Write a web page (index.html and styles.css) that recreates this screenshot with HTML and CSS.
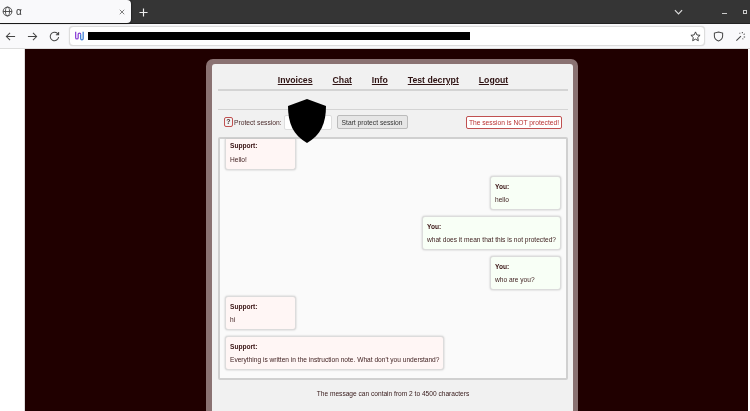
FILE: index.html
```html
<!DOCTYPE html>
<html lang="en">
<head>
<meta charset="utf-8">
<title>α</title>
<link rel="stylesheet" href="styles.css">
</head>
<body>
<div class="browser">
  <div class="tabbar">
    <div class="tab">
      <svg class="globe" viewBox="0 0 12 12" width="11" height="11"><circle cx="6" cy="6" r="4.8"/><ellipse cx="6" cy="6" rx="2.2" ry="4.8"/><path d="M1.2 6h9.6"/></svg>
      <span class="tab-title">α</span>
      <svg class="tab-close" viewBox="0 0 8 8" width="6" height="6"><path d="M1 1l6 6M7 1l-6 6"/></svg>
    </div>
    <svg class="new-tab" viewBox="0 0 10 10" width="9" height="9"><path d="M5 .5v9M.5 5h9"/></svg>
    <div class="tabbar-right">
      <svg class="chev" viewBox="0 0 10 6" width="9" height="6"><path d="M1 1l4 4 4-4"/></svg>
      <span class="min"></span>
      <span class="max"></span>
    </div>
  </div>
  <div class="toolbar">
    <svg class="tool" viewBox="0 0 12 12" width="11" height="11"><path d="M11 6H1.500M5.500 2L1.500 6l4 4"/></svg>
    <svg class="tool" viewBox="0 0 12 12" width="11" height="11"><path d="M1 6h9.500M6.500 2l4 4-4 4"/></svg>
    <svg class="tool reload" viewBox="0 0 12 12" width="11" height="11"><path d="M10.500 6.500A4.600 4.600 0 1 1 9.200 2.700L10.500 4M10.500 1v3h-3"/></svg>
    <div class="urlbar">
      <svg class="urlicon" viewBox="0 0 12 12" width="10" height="10"><path class="u1" d="M2 1v7a1.500 1.500 0 0 0 3 0V4a1.500 1.500 0 0 1 3 0"/><path class="u2" d="M8 4v5a1.500 1.500 0 0 0 3 0V1"/></svg>
      <span class="redact"></span>
      <svg class="star" viewBox="0 0 12 12" width="11" height="11"><path d="M6 1l1.500 3.300 3.500.4-2.600 2.400.7 3.500L6 8.900l-3.100 1.700.7-3.500L1 4.700l3.500-.4z"/></svg>
    </div>
    <svg class="tool shield-tool" viewBox="0 0 12 12" width="11" height="11"><path d="M6 1l4.500 1.300v3.200C10.500 8.500 8 10.300 6 11 4 10.300 1.500 8.500 1.500 5.500V2.300z"/></svg>
    <svg class="tool wand" viewBox="0 0 12 12" width="11" height="11"><path d="M1.500 10.500L6.500 5.500M8 1v1.500M10.500 3l-1 1M11 6.500H9.500M9 9l-.8-.8M5 2l.6.8"/></svg>
  </div>
</div>
<div class="viewport">
  <div class="gutter"></div>
  <main class="site">
    <div class="wrap">
      <div class="panel">
        <nav class="menu">
          <a href="#">Invoices</a>
          <a href="#">Chat</a>
          <a href="#">Info</a>
          <a href="#">Test decrypt</a>
          <a href="#">Logout</a>
        </nav>
        <div class="spacer"></div>
        <div class="protect">
          <span class="help">?</span>
          <label class="protect-label">Protect session:</label>
          <input class="pass" type="text">
          <button class="start">Start protect session</button>
          <span class="status">The session is NOT protected!</span>
        </div>
        <section class="chat">
          <div class="msg them first"><b>Support:</b><p>Hello!</p></div>
          <div class="msg me"><b>You:</b><p>hello</p></div>
          <div class="msg me"><b>You:</b><p>what does it mean that this is not protected?</p></div>
          <div class="msg me"><b>You:</b><p>who are you?</p></div>
          <div class="msg them"><b>Support:</b><p>hi</p></div>
          <div class="msg them"><b>Support:</b><p>Everything is written in the instruction note. What don't you understand?</p></div>
        </section>
        <p class="hint">The message can contain from 2 to 4500 characters</p>
      </div>
    </div>
  </main>
  <div class="edge"></div>
</div>
<svg class="blackshield" viewBox="0 0 38 44" width="38" height="44"><path d="M19 0L38 7C38 24 33 36 19 44 5 36 0 24 0 7z"/></svg>
</body>
</html>
```
FILE: styles.css
```css
* { box-sizing: border-box; }
html, body { margin: 0; height: 411px; overflow: hidden; }
body { font-family: "Liberation Sans", Arial, sans-serif; background: #fff; position: relative; filter: blur(.3px); }

.tabbar { height: 24px; background: #353535; display: flex; align-items: flex-start; border-bottom: 1px solid #222; }
.tab { width: 131px; height: 23px; background: #f9f9fb; border-radius: 0 4px 4px 0; display: flex; align-items: center; padding: 0 6px 0 2px; box-shadow: 0 0 2px #000; }
.globe { fill: none; stroke: #444; stroke-width: 1; }
.tab-title { font-size: 10px; color: #333; margin-left: 3px; flex: 1; }
.tab-close { fill: none; stroke: #555; stroke-width: 1; }
.new-tab { fill: none; stroke: #eee; stroke-width: 1.3; margin: 8px 0 0 8px; }
.tabbar-right { margin-left: auto; display: flex; align-items: center; height: 23px; padding-right: 2px; }
.chev { fill: none; stroke: #ddd; stroke-width: 1.3; }
.min { width: 5px; height: 1px; background: #ccc; margin: 3px 0 0 39px; }
.max { width: 4px; height: 4px; border: 1px solid #ccc; margin: 0 1px 0 16px; }

.toolbar { height: 25px; background: #f9f9fb; display: flex; align-items: center; padding-left: 5px; border-bottom: 1px solid #ddd; }
.tool { fill: none; stroke: #444; stroke-width: 1.1; margin-right: 11px; flex: none; }
.reload { margin-right: 9px; }
.urlbar { width: 636px; height: 20px; background: #fff; border: 1px solid #ddd; border-radius: 4px; display: flex; align-items: center; padding-left: 4px; box-shadow: 0 0 1px #ccc; flex: none; }
.urlicon { fill: none; stroke-width: 1.5; flex: none; }
.u1 { stroke: #8a3fd6; }
.u2 { stroke: #3f7fd6; }
.redact { width: 382px; height: 8px; background: #000; margin-left: 4px; }
.star { fill: none; stroke: #333; stroke-width: 1; margin-left: auto; margin-right: 3px; }
.shield-tool { margin-left: 8px; margin-right: 11px; }
.wand { margin-right: 0; }

.viewport { display: flex; height: 362px; overflow: hidden; }
.gutter { width: 25px; background: #fff; border-right: 1px solid #ddd; flex: none; }
.site { flex: 1; background: #200000; padding: 10px 0 0 181px; overflow: hidden; }
.edge { width: 2px; background: #fff; flex: none; }

.wrap { width: 372px; background: #8a7272; border-radius: 7px 7px 0 0; padding: 5px 5px 0 6px; }
.panel { background: #f1f1f1; border-radius: 3px 3px 0 0; padding: 0 5px 30px 6px; height: 400px; }

.menu { height: 27px; display: flex; justify-content: center; align-items: center; gap: 20px; border-bottom: 2px solid #d4d4d4; padding: 6px 0 0 0; }
.menu a { font-size: 8.7px; font-weight: bold; color: #2e1212; text-decoration: underline; }
.spacer { height: 19px; border-bottom: 1px solid #d4d4d4; }
.protect { height: 27px; display: flex; align-items: center; font-size: 6.7px; color: #4a2a2a; padding-bottom: 3px; }
.help { width: 9px; height: 10px; border: 1px solid #c05050; border-radius: 2px; margin-left: 6px; font-size: 7px; text-align: center; line-height: 8px; font-weight: bold; }
.protect-label { margin-left: 1px; }
.pass { width: 48px; height: 15px; margin-left: 2px; background: #fff; border: 1px solid #ddd; border-radius: 2px; padding: 0; }
.start { height: 14px; width: 71px; margin-left: 5px; padding: 0; font: 6.7px "Liberation Sans", Arial, sans-serif; color: #333; background: #e6e6e6; border: 1px solid #bbb; border-radius: 2px; }
.status { margin-left: auto; margin-right: 6px; width: 96px; text-align: center; height: 13px; line-height: 11px; font-size: 6.7px; color: #b83030; border: 1px solid #c05050; border-radius: 2px; background: #fff; white-space: nowrap; }

.chat { height: 243px; background: #fafafa; border: 2px solid #d0d0d0; border-radius: 2px; padding: 0 5px; display: flex; flex-direction: column; gap: 6px; }
.msg { background: #fff; border: 1px solid #dcdcdc; border-radius: 3px; box-shadow: 0 0 2px #bbb; padding: 5px 4px; font-size: 6.6px; color: #3c1c1c; height: 34px; flex: none; }
.msg b { display: block; line-height: 9px; color: #3a1414; }
.msg p { margin: 4px 0 0; line-height: 9px; }
.them { align-self: flex-start; background: #fff6f5; min-width: 71px; }
.me { align-self: flex-end; background: #f8fff6; min-width: 71px; }
.them.first { height: 31px; padding-top: 2px; border-top: 0; border-radius: 0 0 3px 3px; }
.them.first p { margin-top: 5px; }
.hint { margin: 10px 0 0; text-align: center; font-size: 6.6px; color: #3c2020; }

.blackshield { position: absolute; left: 288px; top: 99px; fill: #000; }
```
